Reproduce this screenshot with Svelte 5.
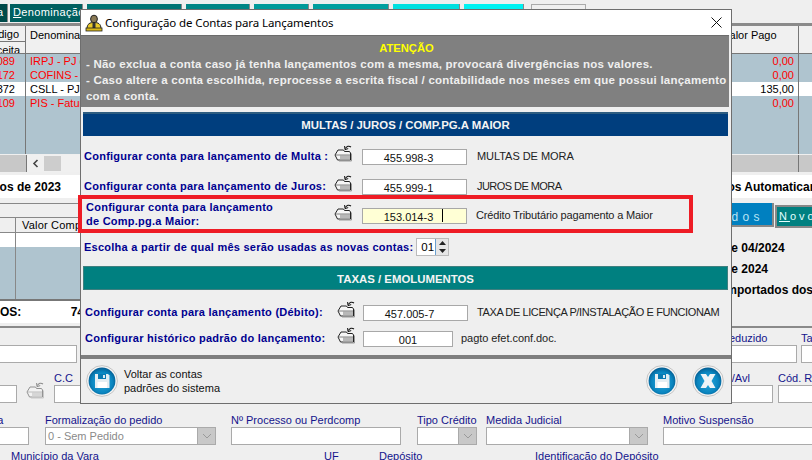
<script lang="ts">
  const tabs = [
    { w: 72, c: "#005f5f", text: "Denominação" },
    { w: 94, c: "#007474" },
    { w: 63, c: "#008585" },
    { w: 54, c: "#009a9a" },
    { w: 75, c: "#009f9f" },
    { w: 66, c: "#00e0e0" },
    { w: 59, c: "#00f2f2" },
  ];
  const rows = [
    { code: "2089", name: "IRPJ - PJ quota", val: "0,00", red: true },
    { code: "2172", name: "COFINS - Faturamento", val: "0,00", red: true },
    { code: "2372", name: "CSLL - PJ quota", val: "135,00", red: false },
    { code: "8109", name: "PIS - Faturamento", val: "0,00", red: true },
  ];
  const formA = [
    { x: -2, w: 79, label: "" },
    { x: 721, w: 76, label: "Deduzido" },
    { x: 801, w: 30, label: "Taxa" },
  ];
  const formB = [
    { x: -2, w: 19, label: "" },
    { x: 54, w: 40, label: "C.C" },
    { x: 714, w: 59, label: "ISS/Avl" },
    { x: 778, w: 50, label: "Cód. Receita" },
  ];
  const formC = [
    { x: -37, w: 66, label: "Alíquota" },
    { x: 45, w: 171, label: "Formalização do pedido", select: "0 - Sem Pedido" },
    { x: 231, w: 170, label: "Nº Processo ou Perdcomp" },
    { x: 417, w: 60, label: "Tipo Crédito", select: " " },
    { x: 486, w: 162, label: "Medida Judicial", select: " " },
    { x: 663, w: 170, label: "Motivo Suspensão" },
  ];
  const formD = [
    { x: 11, label: "Município da Vara" },
    { x: 324, label: "UF" },
    { x: 379, label: "Depósito" },
    { x: 535, label: "Identificação do Depósito" },
  ];
</script>

{#snippet folder(muted = false)}
  <svg class="folder" class:muted width="19" height="17" viewBox="0 0 19 17">
    <path d="M4 5 H9.5 L10.5 6.5 H15.5 L16.5 8 V15 H3.5 L1 10 Z" fill="#f6f6f6" stroke="#222" stroke-width="1" />
    <rect x="6" y="10.5" width="10" height="4" fill="#b8b8b8" />
    <path d="M1.5 10 H16" stroke="#666" stroke-width="0.8" />
    <path d="M17.5 8.5 V16 H5" fill="none" stroke="#999" stroke-width="1" />
    <path d="M17 2 C15 0.6 12.6 1 11.4 3.6" fill="none" stroke="#111" stroke-width="1.1" />
    <path d="M10.6 1 L11 4.6 L14.2 3.6" fill="none" stroke="#111" stroke-width="1" />
  </svg>
{/snippet}

{#snippet roundIcon(kind: string)}
  <svg width="32" height="32" viewBox="0 0 32 32">
    <defs>
      <radialGradient id="orb-{kind}" cx="50%" cy="55%" r="55%">
        <stop offset="0%" stop-color="#2aa8dc" />
        <stop offset="70%" stop-color="#0a86c0" />
        <stop offset="100%" stop-color="#045d92" />
      </radialGradient>
    </defs>
    <circle cx="16" cy="16" r="15.4" fill="#f4f4f4" stroke="#c4c4c4" />
    <circle cx="16" cy="16" r="13.4" fill="url(#orb-{kind})" />
    {#if kind === "x"}
      <path d="M8.5 9 L14 9 L16 12 L18 9 L23.5 9 L19.5 16 L23.5 23 L18 23 L16 20 L14 23 L8.5 23 L12.5 16 Z" fill="#eef4f7" />
    {:else}
      <path d="M9 9 L22 9 L23.5 10.5 L23.5 23 L9 23 Z" fill="#e4eef3" />
      <rect x="12" y="9" width="8" height="5" fill="#0a7bb3" />
      <rect x="17" y="10" width="2" height="3" fill="#e4eef3" />
      <rect x="11.5" y="17" width="9.5" height="6" fill="#fff" />
    {/if}
  </svg>
{/snippet}

{#snippet field(f: any)}
  <div class="field" style="left: {f.x}px; width: {f.w}px">
    <span class="flabel">{f.label}</span>
    {#if f.w}
      <div class="finput">
        {#if f.select}
          <span class="ftext">{f.select}</span>
          <span class="dropdown">
            <svg width="10" height="6" viewBox="0 0 10 6"><path d="M1 1 L5 5 L9 1" fill="none" stroke="#9a9a9a" /></svg>
          </span>
        {/if}
      </div>
    {/if}
  </div>
{/snippet}

<div class="screen">
  <div class="tabs">
    <div class="tab first"><span>a</span></div>
    {#each tabs as t}
      <div class="tab" style="width: {t.w}px; background: {t.c}">
        {#if t.text}<span><u>D</u>enominação</span>{/if}
      </div>
    {/each}
    <div class="tab outline"></div>
  </div>

  <div class="grid">
    <div class="ghead code">
      <div class="hcell"><span>Código</span></div>
      <div class="hcell"><span>Receita</span></div>
    </div>
    <div class="ghead name">Denominação</div>
    <div class="ghead val">Valor Pago</div>
    <div class="ghead last"></div>
    {#each rows as r}
      <div class="cell num codecell" class:red={r.red} class:sel={!r.red}><span>{r.code}</span></div>
      <div class="cell" class:red={r.red} class:sel={!r.red}>{r.name}</div>
      <div class="cell num" class:red={r.red} class:sel={!r.red}><span>{r.val}</span></div>
      <div class="cell" class:sel={!r.red}></div>
    {/each}
    <div class="fill"></div>
    <div class="fill"></div>
    <div class="fill"></div>
    <div class="fill"></div>
  </div>
  <div class="scrollrow">
    <div class="scroll-corner"></div>
    <div class="scrolltrack">
      <svg width="7" height="9" viewBox="0 0 7 9"><path d="M5.5 1 L2 4.5 L5.5 8" fill="none" stroke="#444" stroke-width="1.6" /></svg>
      <div class="thumb"></div>
    </div>
    <div class="scroll-end"></div>
  </div>

  <div class="whiteband">
    <div class="clip-left"><span class="bold">Lançados de 2023</span></div>
    <span class="bold clip-right">Lançados Automaticamente</span>
  </div>

  <div class="middle">
    <div class="mid-left">
      <div class="strip"></div>
      <div class="minihead"><span>Valor Compensado</span></div>
      <div class="miniwhite"></div>
      <div class="miniblue"></div>
      <div class="totals"><span class="bold">OS:</span><span class="bold">74</span></div>
    </div>
    <div class="mid-right">
      <div class="subtabs">
        <div class="subtab blue"><span>o d o s</span></div>
        <div class="subtab teal"><u>N</u>ovo</div>
      </div>
      <p class="bold info">de 04/2024</p>
      <p class="bold info">de 2024</p>
      <p class="bold info far">Importados dos Arquivos</p>
    </div>
  </div>
  <div class="rule"></div>

  <div class="form">
    <div class="frow">{#each formA as f}{@render field(f)}{/each}</div>
    <div class="frow b">
      {#each formB as f}{@render field(f)}{/each}
      <div class="ghost-folder">{@render folder(true)}</div>
    </div>
    <div class="frow c">{#each formC as f}{@render field(f)}{/each}</div>
    <div class="frow d">{#each formD as f}{@render field(f)}{/each}</div>
  </div>

  <div class="dialog">
    <header class="titlebar">
      <svg class="appicon" width="18" height="18" viewBox="0 0 18 18">
        <ellipse cx="9" cy="5" rx="3.4" ry="3.8" fill="#8a7a55" stroke="#222" />
        <path d="M2 15 C2 9.5 5 8.5 9 8.5 C13 8.5 16 9.5 16 15 Z" fill="#e9c92a" stroke="#222" />
        <rect x="7.5" y="9" width="3" height="5" fill="#333" />
        <rect x="1" y="14" width="16" height="3" fill="#d9b818" stroke="#222" stroke-width="0.8" />
      </svg>
      <span class="title">Configuração de Contas para Lançamentos</span>
      <svg class="close" width="11" height="11" viewBox="0 0 11 11"><path d="M0.5 0.5 L10.5 10.5 M10.5 0.5 L0.5 10.5" stroke="#111" stroke-width="1" /></svg>
    </header>

    <section class="warning">
      <h2>ATENÇÃO</h2>
      <p>- Não exclua a conta caso já tenha lançamentos com a mesma, provocará divergências nos valores.</p>
      <p>- Caso altere a conta escolhida, reprocesse a escrita fiscal / contabilidade nos meses em que possui lançamento com a conta.</p>
    </section>

    <div class="bar navy">MULTAS / JUROS / COMP.PG.A MAIOR</div>

    <div class="row r1">
      <label>Configurar conta para lançamento de Multa :</label>
      {@render folder()}
      <div class="box">455.998-3</div>
      <span class="desc">MULTAS DE MORA</span>
    </div>
    <div class="row r2">
      <label>Configurar conta para lançamento de Juros:</label>
      {@render folder()}
      <div class="box">455.999-1</div>
      <span class="desc tight">JUROS DE MORA</span>
    </div>
    <div class="row r3">
      <label class="two">Configurar conta para lançamento<br />de Comp.pg.a Maior:</label>
      {@render folder()}
      <div class="box active">153.014-3<i class="caret"></i></div>
      <span class="desc snug">Crédito Tributário pagamento a Maior</span>
    </div>
    <div class="month">
      <label>Escolha a partir de qual mês serão usadas as novas contas:</label>
      <div class="spin">
        <span>01</span>
        <div class="arrows">
          <svg width="9" height="6" viewBox="0 0 9 6"><path d="M4.5 1 L8 5 L1 5 Z" fill="#222" /></svg>
          <svg width="9" height="6" viewBox="0 0 9 6"><path d="M1 1 L8 1 L4.5 5 Z" fill="#222" /></svg>
        </div>
      </div>
    </div>

    <div class="bar teal">TAXAS / EMOLUMENTOS</div>

    <div class="row r4">
      <label>Configurar conta para lançamento (Débito):</label>
      {@render folder()}
      <div class="box">457.005-7</div>
      <span class="desc squeezed">TAXA DE LICENÇA P/INSTALAÇÃO E FUNCIONAM</span>
    </div>
    <div class="row r5">
      <label>Configurar histórico padrão do lançamento:</label>
      {@render folder()}
      <div class="box short">001</div>
      <span class="desc near">pagto efet.conf.doc.</span>
    </div>

    <footer class="foot">
      {@render roundIcon("reset")}
      <span class="foot-text">Voltar as contas<br />padrões do sistema</span>
      <div class="foot-actions">
        {@render roundIcon("save")}
        {@render roundIcon("x")}
      </div>
    </footer>
  </div>

  <div class="redmark"></div>
</div>

<style>
  :global(body) {
    margin: 0;
    background: #efefef;
  }
  .screen {
    position: relative;
    width: 812px;
    height: 460px;
    overflow: hidden;
    background: #efefef;
    font-family: "Liberation Sans", Arial, sans-serif;
    font-size: 11px;
    color: #000;
  }
  .bold {
    font-weight: 700;
  }

  /* background window */
  .tabs {
    display: flex;
    gap: 4px;
    height: 19px;
    padding-top: 4px;
    margin-left: -2px;
  }
  .tab {
    height: 18px;
    border-right: 1px solid #888;
    color: #fff;
    font-size: 11px;
    line-height: 17px;
  }
  .tab span {
    padding-left: 3px;
    letter-spacing: 0.35px;
  }
  .tab.first {
    width: 9px;
    background: #004a4a;
    margin-right: -2px;
    overflow: hidden;
  }
  .tab.first span {
    padding-left: 0;
    margin-left: -1px;
  }
  .tab.outline {
    width: 53px;
    margin-left: 3px;
    background: transparent;
    border: 1px solid #aaa;
  }
  .grid {
    display: grid;
    grid-template-columns: 26px 693px 80px 1fr;
    grid-template-rows: 28px 14px 14px 14px 14px 44px;
    border-top: 3px solid #8a8a8a;
    height: 129px;
  }
  .ghead {
    background: #f0f0f0;
    border-right: 1px solid #777;
    border-bottom: 1px solid #777;
    padding: 2px 0 0 4px;
    overflow: hidden;
    white-space: nowrap;
    line-height: 14px;
    font-size: 11px;
  }
  .ghead.code {
    padding: 0;
    display: flex;
    flex-direction: column;
  }
  .hcell {
    display: flex;
    justify-content: flex-end;
    height: 14px;
    padding: 1px 6px 0 0;
  }
  .hcell + .hcell {
    border-top: 1px solid #777;
    padding-right: 5px;
  }
  .ghead.last {
    border-right: 0;
  }
  .cell {
    background: #afc4cf;
    border-right: 1px solid #777;
    padding-left: 4px;
    overflow: hidden;
    white-space: nowrap;
    line-height: 14px;
    font-size: 11px;
  }
  .cell:nth-child(4n) {
    border-right: 0;
  }
  .cell.num {
    display: flex;
    justify-content: flex-end;
    padding: 0 4px 0 0;
  }
  .cell.num.codecell {
    padding-right: 10px;
  }
  .cell.red {
    color: #ff0000;
  }
  .cell.sel {
    background: #fff;
  }
  .fill {
    background: #afc4cf;
    border-right: 1px solid #777;
  }
  .fill:last-child {
    border-right: 0;
  }
  .scrollrow {
    display: flex;
    height: 17px;
    background: #c8c8c8;
  }
  .scroll-corner {
    width: 26px;
    border-right: 1px solid #777;
  }
  .scrolltrack {
    width: 180px;
    background: #f0f0f0;
    display: flex;
    align-items: center;
    padding-left: 5px;
  }
  .thumb {
    width: 17px;
    height: 15px;
    margin-left: 5px;
    background: #cdcdcd;
  }
  .scroll-end {
    margin-left: auto;
    width: 13px;
    border-left: 1px solid #777;
  }
  .whiteband {
    display: flex;
    justify-content: space-between;
    margin-top: 3px;
    height: 23px;
    background: #fff;
    line-height: 24px;
    font-size: 12px;
    overflow: hidden;
    white-space: nowrap;
  }
  .clip-left {
    width: 61px;
    display: flex;
    justify-content: flex-end;
  }
  .clip-right {
    margin-right: -33px;
  }
  .middle {
    display: flex;
    justify-content: space-between;
    margin-top: 5px;
    height: 123px;
  }
  .mid-left {
    width: 81px;
    border-top: 1px solid #888;
    display: flex;
    flex-direction: column;
  }
  .strip {
    height: 13px;
    border-bottom: 1px solid #888;
  }
  .minihead {
    height: 14px;
    padding-left: 22px;
    border-bottom: 1px solid #888;
    white-space: nowrap;
    overflow: hidden;
    line-height: 15px;
    letter-spacing: 0.2px;
    background: linear-gradient(#888, #888) 15px 0 / 1px 100% no-repeat;
  }
  .miniwhite {
    height: 14px;
    background: linear-gradient(#888, #888) 15px 0 / 1px 100% no-repeat #fff;
  }
  .miniblue {
    height: 52px;
    background: linear-gradient(#888, #888) 15px 0 / 1px 100% no-repeat #afc4cf;
    border-bottom: 2px solid #777;
  }
  .totals {
    height: 22px;
    background: #fff;
    display: flex;
    justify-content: space-between;
    line-height: 22px;
    font-size: 12px;
    white-space: nowrap;
    width: 84px;
  }
  .mid-right {
    width: 80px;
    overflow: hidden;
    white-space: nowrap;
  }
  .subtabs {
    display: flex;
    gap: 1px;
    height: 25px;
    margin-top: -1px;
  }
  .subtab {
    line-height: 24px;
    color: #fff;
    font-size: 12px;
    letter-spacing: 0.5px;
  }
  .subtab.blue {
    width: 42px;
    flex: none;
    background: #0080c0;
    border-right: 2px solid #888;
    border-bottom: 2px solid #888;
    box-sizing: border-box;
    color: #b8e4f5;
    display: flex;
    justify-content: flex-end;
    padding-right: 12px;
    line-height: 30px;
  }
  .subtab.teal {
    flex: none;
    width: 60px;
    margin-top: 3px;
    height: 19px;
    line-height: 18px;
    background: #008080;
    border: 1px solid #888;
    border-width: 2px 0 2px 2px;
    padding-left: 2px;
    color: #e4ffff;
    font-size: 11px;
    letter-spacing: 3px;
  }
  .info {
    margin: 0 0 0 -8px;
    height: 21px;
    line-height: 21px;
    font-size: 12px;
  }
  .info.far {
    margin-left: -9px;
  }
  .subtabs + .info {
    margin-top: 11px;
  }
  .rule {
    height: 2px;
    background: #8a8a8a;
  }
  .form {
    position: relative;
    padding-top: 4px;
  }
  .frow {
    display: block;
    position: relative;
    height: 31px;
  }
  .frow.b {
    margin-top: 9px;
  }
  .frow.c {
    margin-top: 11px;
  }
  .frow.d {
    margin-top: 5px;
  }
  .field {
    position: absolute;
    top: 0;
    white-space: nowrap;
  }
  .flabel {
    display: block;
    height: 13px;
    line-height: 13px;
    font-size: 11px;
    color: #14148c;
  }
  .finput {
    box-sizing: border-box;
    height: 18px;
    background: #fff;
    border: 1px solid #aaa;
    display: flex;
    justify-content: space-between;
    line-height: 17px;
    color: #8a8a8a;
    font-size: 11px;
  }
  .ftext {
    padding-left: 2px;
  }
  .dropdown {
    width: 17px;
    background: #c8c8c8;
    display: flex;
    align-items: center;
    justify-content: center;
    border-left: 1px solid #aaa;
    flex: none;
  }
  .ghost-folder {
    position: absolute;
    left: 26px;
    top: 10px;
  }
  .folder.muted {
    opacity: 0.45;
  }

  /* dialog */
  .dialog {
    position: absolute;
    left: 80px;
    top: 9px;
    box-sizing: border-box;
    width: 652px;
    height: 395px;
    background: #efefef;
    border: 1px solid #6e6e6e;
  }
  .titlebar {
    display: flex;
    align-items: center;
    height: 25px;
    background: #fff;
    padding: 0 9px 0 4px;
  }
  .appicon {
    flex: none;
  }
  .title {
    margin-left: 2px;
    font-family: "Noto Sans", sans-serif;
    font-size: 11.5px;
    letter-spacing: -0.1px;
    color: #000;
    white-space: nowrap;
  }
  .close {
    margin-left: auto;
  }
  .warning {
    box-sizing: border-box;
    height: 72px;
    width: 648px;
    background: #808080;
    border-top: 1px solid #6c6c6c;
    padding: 4px 2px 0 5px;
    color: #efefef;
    font-weight: 700;
    font-size: 11.5px;
    letter-spacing: 0.22px;
    line-height: 16px;
  }
  .warning h2 {
    margin: 0;
    color: #ffff00;
    font-size: 11.2px;
    letter-spacing: 0;
    line-height: 16px;
    text-align: center;
    font-weight: 700;
  }
  .warning p {
    margin: 0;
  }
  .bar {
    box-sizing: border-box;
    margin-left: 2px;
    width: 645px;
    height: 24px;
    text-align: center;
    color: #f4f4f4;
    font-weight: 700;
    font-size: 11.4px;
    line-height: 24px;
  }
  .bar.navy {
    margin-top: 5px;
    background: #003e7e;
    border-top: 2px solid #2d5c80;
    line-height: 22px;
  }
  .bar.teal {
    background: #008080;
    border: 1px solid #3f7f7f;
  }
  .row {
    display: grid;
    grid-template-columns: 250px 28px auto 1fr;
    align-items: start;
    padding-left: 3px;
    height: 16px;
  }
  .row label,
  .month label {
    color: #000090;
    font-weight: 700;
    font-size: 11px;
    line-height: 14px;
    white-space: nowrap;
    letter-spacing: 0.25px;
  }
  label.two {
    margin: -8px 0 0 2px;
  }
  .row .folder {
    margin-top: -4px;
  }
  .r1 {
    margin-top: 13px;
  }
  .r2 {
    margin-top: 14px;
  }
  .r3 {
    margin-top: 13px;
  }
  .r4 {
    margin-top: 15px;
    grid-template-columns: 252px 26px auto 1fr;
    padding-left: 4px;
  }
  .r5 {
    margin-top: 10px;
    grid-template-columns: 252px 26px auto 1fr;
    padding-left: 4px;
  }
  .box {
    position: relative;
    box-sizing: border-box;
    width: 105px;
    height: 16px;
    padding-right: 12px;
    background: #fff;
    border: 1px solid #a8a8a8;
    text-align: center;
    line-height: 16px;
    font-size: 11px;
    color: #111;
  }
  .box.short {
    width: 90px;
    padding-right: 0;
  }
  .box.active {
    background: #ffffd5;
  }
  .caret {
    position: absolute;
    left: 79px;
    top: 0;
    height: 13px;
    border-left: 1px solid #000;
  }
  .desc {
    padding-left: 10px;
    font-size: 11px;
    line-height: 14px;
    color: #222;
    white-space: nowrap;
    letter-spacing: -0.05px;
  }
  .desc.tight {
    letter-spacing: -0.55px;
  }
  .desc.snug {
    padding-left: 9px;
    letter-spacing: -0.15px;
  }
  .desc.squeezed {
    padding-left: 9px;
    letter-spacing: -0.4px;
  }
  .desc.near {
    padding-left: 8px;
  }
  .month {
    display: flex;
    align-items: center;
    gap: 3px;
    padding-left: 3px;
    height: 18px;
    margin-top: 14px;
    margin-bottom: 10px;
  }
  .spin {
    box-sizing: border-box;
    width: 33px;
    height: 18px;
    background: #fff;
    border: 1px solid #bbb;
    display: flex;
    justify-content: space-between;
    padding-left: 4px;
    line-height: 16px;
    font-size: 11.5px;
  }
  .arrows {
    width: 12px;
    background: #e6e6e6;
    border-left: 1px solid #6aa0d0;
    display: flex;
    flex-direction: column;
    align-items: center;
    justify-content: space-around;
  }
  .foot {
    position: absolute;
    left: 0;
    right: 0;
    bottom: 0;
    box-sizing: border-box;
    height: 48px;
    border-top: 4px solid #7e7e7e;
    display: flex;
    align-items: center;
    padding: 0 7px 0 5px;
  }
  .foot-text {
    margin-left: 6px;
    line-height: 14px;
    font-size: 11px;
    color: #111;
  }
  .foot-actions {
    margin-left: auto;
    display: flex;
    gap: 14px;
  }
  .redmark {
    position: absolute;
    left: 78px;
    top: 195px;
    width: 615px;
    height: 38px;
    box-sizing: border-box;
    border: 4px solid #ee1c25;
    pointer-events: none;
  }
</style>
